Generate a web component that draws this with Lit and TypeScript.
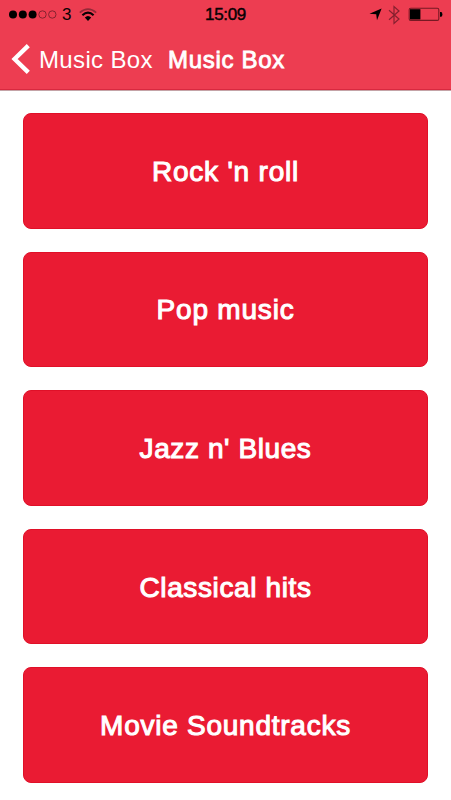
import { LitElement, html, css } from "lit";
import { customElement } from "lit/decorators.js";

const GENRES = [
  { label: "Rock 'n roll", spacing: 0.8 },
  { label: "Pop music", spacing: 0.8 },
  { label: "Jazz n' Blues", spacing: 0.6 },
  { label: "Classical hits", spacing: 0.62 },
  { label: "Movie Soundtracks", spacing: 0.75 },
];

@customElement("status-bar")
class StatusBar extends LitElement {
  static styles = css`
    :host { display: grid; grid-template-columns: 1fr auto 1fr; align-items: center; height: 29px; color: #080204; }
    .left, .right { display: flex; align-items: center; }
    .left { padding-left: 9px; }
    .right { justify-content: flex-end; padding-right: 8px; }
    .carrier { font-size: 17px; margin: 0 8px 0 5px; line-height: 20px; }
    .time { font-size: 17px; line-height: 20px; -webkit-text-stroke: 0.45px #080204; letter-spacing: -0.35px; }
    svg { display: block; }
    .arrow { margin-right: 6px; }
    .bt { margin-right: 8px; }
  `;
  render() {
    return html`
      <div class="left">
        <svg width="48" height="10" viewBox="0 0 48 10">
          <circle cx="4" cy="4.5" r="4" /><circle cx="13.8" cy="4.5" r="4" /><circle cx="23.6" cy="4.5" r="4" />
          <g fill="none" stroke="#86232f" stroke-width="1"><circle cx="33.5" cy="4.5" r="3.7" /><circle cx="43.3" cy="4.5" r="3.7" /></g>
        </svg>
        <span class="carrier">3</span>
        <svg width="18" height="14" viewBox="0 0 18 14">
          <path d="M.8 4.6Q9-2.4 17.2 4.6" fill="none" stroke="#952a38" stroke-width="1.8" />
          <path d="M3.4 7.2Q9 2.2 14.6 7.2" fill="none" stroke="#080204" stroke-width="2.2" />
          <path d="M5.8 9.6Q9 6.6 12.2 9.6L9 13Z" />
        </svg>
      </div>
      <div class="time">15:09</div>
      <div class="right">
        <svg class="arrow" width="13" height="13" viewBox="0 0 13 13"><path d="M12.6 .4L8 12.2L7.2 6.3L.5 5.8Z" /></svg>
        <svg class="bt" width="12" height="20" viewBox="0 0 12 20">
          <path d="M1 5.3L11 14L6 18.5V1.5L11 6L1 14.7" fill="none" stroke="#86202f" stroke-width="1.2" />
        </svg>
        <svg width="35" height="15" viewBox="0 0 35 15">
          <rect x="1.2" y="1.2" width="29.6" height="12.2" rx="1.5" fill="none" stroke="#761923" stroke-width="1.1" />
          <rect x="2" y="2.2" width="10.4" height="10.2" /><path d="M32 5h1q1.4 0 1.4 2.4T33 9.8h-1Z" />
        </svg>
      </div>`;
  }
}

@customElement("nav-bar")
class NavBar extends LitElement {
  static styles = css`
    :host { display: flex; align-items: center; height: 60px; padding-left: 11px; color: #fff; font-size: 24px; line-height: 30px; white-space: nowrap; }
    svg { display: block; margin-right: 9px; }
    .back, .title { padding-top: 2px; }
    .back { width: 129px; letter-spacing: 0.35px; }
    .title { -webkit-text-stroke: 0.85px #fff; letter-spacing: 0.7px; }
  `;
  render() {
    return html`
      <svg width="19" height="30" viewBox="0 0 19 30"><path d="M17.3 1.7L3.6 15L17.3 28.3" fill="none" stroke="#fff" stroke-width="4.4" /></svg>
      <span class="back">Music Box</span>
      <span class="title">Music Box</span>`;
  }
}

@customElement("app-root")
class AppRoot extends LitElement {
  static styles = css`
    :host { display: block; height: 800px; overflow: hidden; background: #fff; font-family: "Liberation Sans", Arial, sans-serif; }
    header { box-sizing: border-box; height: 91px; background: #ed3d51; border-bottom: 1px solid #c4a3a7; box-shadow: inset 0 -1px #d8293f; }
    main { display: flex; flex-direction: column; gap: 23.1px; padding: 22px 23px 0; }
    .card { height: 115.5px; border-radius: 8px; background: #ea1b33; color: #fff; display: flex; align-items: center; justify-content: center;
      box-sizing: border-box; border: 1px solid #e01028; padding-top: 2px; font-size: 28px; line-height: 32px; -webkit-text-stroke: 1.05px #fff; white-space: nowrap; }
  `;
  render() {
    return html`
      <header><status-bar></status-bar><nav-bar></nav-bar></header>
      <main>
        ${GENRES.map((g) => html`<div class="card" style="letter-spacing:${g.spacing}px">${g.label}</div>`)}
      </main>`;
  }
}
